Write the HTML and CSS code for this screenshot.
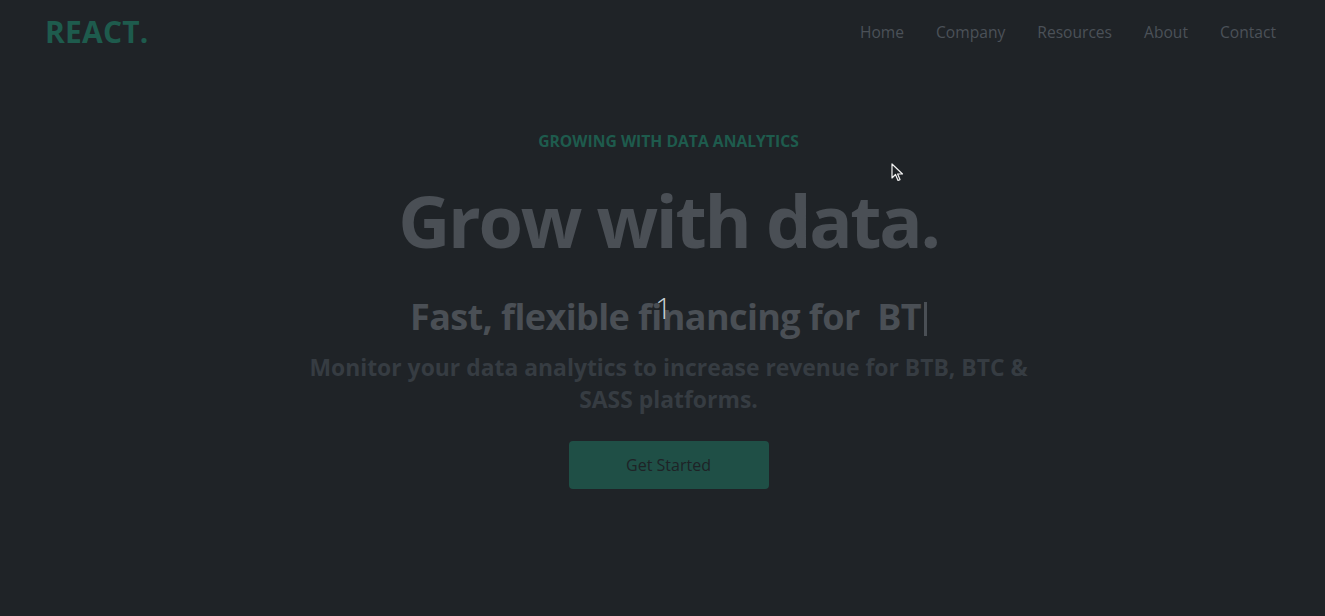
FILE: index.html
```html
<!DOCTYPE html>
<html lang="en">
<head>
<meta charset="utf-8">
<title>React.</title>
<link rel="stylesheet" href="styles.css">
</head>
<body>
<header class="navbar">
  <h1 class="logo">REACT.</h1>
  <nav>
    <ul class="nav-list">
      <li>Home</li>
      <li>Company</li>
      <li>Resources</li>
      <li>About</li>
      <li>Contact</li>
    </ul>
  </nav>
</header>
<main class="hero">
  <p class="tagline">GROWING WITH DATA ANALYTICS</p>
  <h2 class="headline">Grow with data.</h2>
  <p class="typed">Fast, flexible financing for&nbsp; BT<span class="caret"></span></p>
  <p class="lead">Monitor your data analytics to increase revenue for BTB, BTC &amp; SASS platforms.</p>
  <button class="cta">Get Started</button>
</main>
<span class="stray">1</span>
<svg class="cursor" width="14" height="20" viewBox="0 0 14 20"><path d="M1 1 L1 15 L4.5 11.5 L7 17.5 L9 16.6 L6.6 11 L11.5 11 Z" fill="#1f2327" stroke="#f2f2f2" stroke-width="1.2" stroke-linejoin="round"/></svg>
</body>
</html>
```
FILE: styles.css
```css
* { box-sizing: border-box; }
html, body { margin: 0; padding: 0; }
body {
  background: #1f2327;
  font-family: "Open Sans", "Noto Sans", sans-serif;
  width: 1325px;
  height: 616px;
  overflow: hidden;
  position: relative;
}
.navbar {
  height: 63px;
  display: flex;
  align-items: center;
  justify-content: space-between;
  padding: 0 49px 0 45px;
}
.logo {
  margin: 0;
  font-size: 30px;
  font-weight: 700;
  color: #1e5b4d;
  letter-spacing: 0.2px;
}
.nav-list {
  list-style: none;
  margin: 0;
  padding: 0;
  display: flex;
  gap: 32px;
  font-size: 15.6px;
  color: #4b5158;
}
.hero {
  display: flex;
  flex-direction: column;
  align-items: center;
  text-align: center;
  padding-top: 67px;
  padding-left: 12px;
}
.tagline {
  margin: 0;
  color: #1e5b4d;
  font-weight: 700;
  font-size: 15.7px;
}
.headline {
  margin: 24px 0 0;
  color: #4a4f55;
  font-size: 72px;
  font-weight: 700;
  letter-spacing: -2.3px;
  line-height: 88px;
}
.typed {
  margin: 29px 0 0;
  color: #4a4f55;
  font-size: 36px;
  font-weight: 700;
  letter-spacing: -0.6px;
  line-height: 48px;
}
.caret {
  display: inline-block;
  width: 3px;
  height: 34px;
  margin-left: 3px;
  background: #4a4f55;
  vertical-align: -6px;
}
.stray {
  position: absolute;
  left: 655px;
  top: 290px;
  color: #c9d1d3;
  font-size: 30px;
  font-weight: 300;
  line-height: 36px;
}
.lead {
  margin: 11px 0 0;
  max-width: 740px;
  color: #363c42;
  font-size: 22.9px;
  font-weight: 700;
  line-height: 32px;
}
.cta {
  margin-top: 25px;
  width: 200px;
  height: 48px;
  border: 0;
  border-radius: 4px;
  background: #1f4f46;
  color: #1e2326;
  font-family: inherit;
  font-size: 16px;
  font-weight: 500;
}
.cursor { position: absolute; left: 891px; top: 163px; }
```
